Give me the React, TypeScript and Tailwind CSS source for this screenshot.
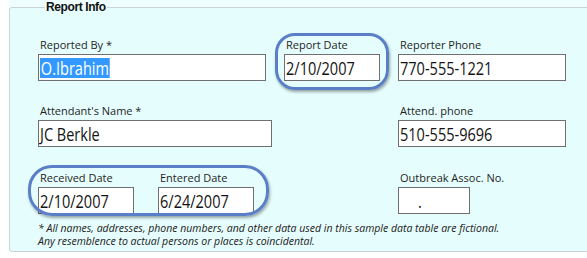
import React from "react";

const labelCls =
  "block pl-[2px] text-[11px] leading-[15px] text-[#1e1e1e] whitespace-nowrap";
const boxCls =
  "h-[27px] border border-[#6f6f6f] bg-white flex items-center pl-[1px] text-[17.5px] text-[#141414] whitespace-nowrap overflow-hidden";

function Field({
  label,
  value,
  w,
  className = "",
  valueClass = "",
}: {
  label: string;
  value: React.ReactNode;
  w: string;
  className?: string;
  valueClass?: string;
}) {
  return (
    <div className={`flex flex-col gap-[2px] ${w} ${className}`}>
      <span className={labelCls}>{label}</span>
      <div className={`${boxCls} ${valueClass}`}>
        <span className="inline-block origin-left scale-x-[0.83] leading-[24px]">
          {value}
        </span>
      </div>
    </div>
  );
}

export default function App() {
  return (
    <div
      className="relative w-[587px] h-[258px] overflow-hidden bg-white"
      style={{ fontFamily: '"Open Sans", "Noto Sans", sans-serif' }}
    >
      <div className="ml-[9px] bg-[#eefefe] w-[600px]">
        <fieldset className="w-[600px] h-[252px] border border-[#c9d3d8] rounded-[3px] bg-[#e6fdfd] pl-[28px]">
          <legend
            className="ml-[7px] px-[1px] text-[12px] leading-[15px] font-bold text-[#111] tracking-[-0.4px]"
            style={{ fontFamily: '"Liberation Sans", Arial, sans-serif' }}
          >
            Report Info
          </legend>
          <div className="flex flex-col pt-[22px]">
            <div className="flex">
              <Field
                label="Reported By *"
                w="w-[228px]"
                value={
                  <span className="bg-[#3399ff] text-white leading-[20px] px-[1px] inline-block">
                    O.Ibrahim
                  </span>
                }
              />
              <Field
                label="Report Date"
                w="w-[96px]"
                className="ml-[18px]"
                value="2/10/2007"
              />
              <Field
                label="Reporter Phone"
                w="w-[168px]"
                className="ml-[18px]"
                value="770-555-1221"
              />
            </div>
            <div className="flex mt-[22px]">
              <Field
                label="Attendant's Name *"
                w="w-[234px]"
                value="JC Berkle"
              />
              <Field
                label="Attend. phone"
                w="w-[168px]"
                className="ml-[126px]"
                value="510-555-9696"
              />
            </div>
            <div className="flex mt-[23px]">
              <Field label="Received Date" w="w-[96px]" value="2/10/2007" />
              <Field
                label="Entered Date"
                w="w-[96px]"
                className="ml-[24px]"
                value="6/24/2007"
              />
              <Field
                label="Outbreak Assoc. No."
                w="w-[72px]"
                className="ml-[144px]"
                valueClass="pl-[19px]"
                value="."
              />
            </div>
            <div className="mt-[8px] flex flex-col text-[10.5px] italic text-[#202020] whitespace-nowrap">
              <span className="block h-[13px] leading-[13px]">
                * All names, addresses, phone numbers, and other data used in
                this sample data table are fictional.
              </span>
              <span className="block h-[13px] leading-[13px]">
                Any resemblence to actual persons or places is coincidental.
              </span>
            </div>
          </div>
        </fieldset>
      </div>
      <div className="absolute left-[275px] top-[33px] w-[114px] h-[57px] rounded-[20px] border-[3px] border-[#5a7fc7] shadow-[1px_2px_3px_rgba(0,0,0,0.35)]" />
      <div className="absolute left-[28px] top-[165px] w-[241px] h-[51px] rounded-[24px] border-[3px] border-[#5a7fc7] shadow-[1px_2px_3px_rgba(0,0,0,0.35)]" />
    </div>
  );
}
